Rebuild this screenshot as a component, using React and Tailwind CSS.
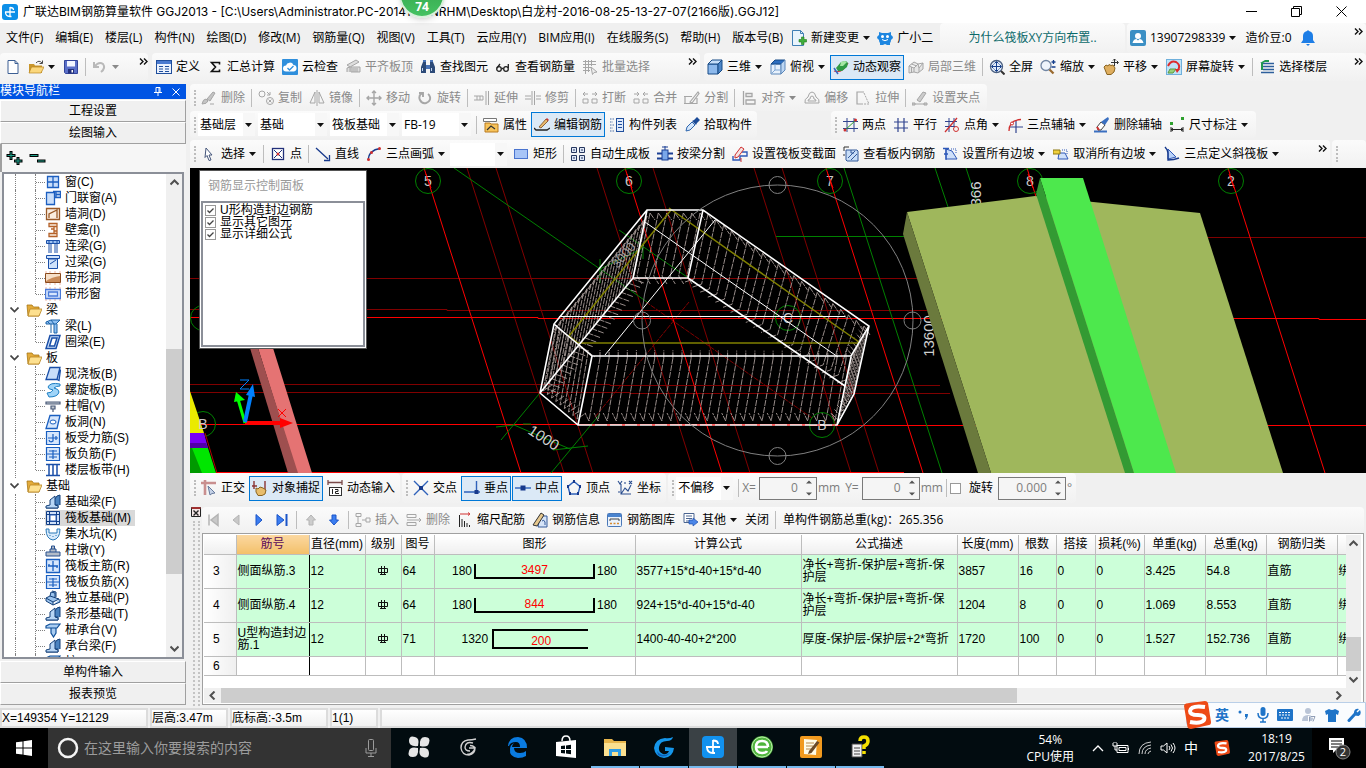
import clsx from "clsx";

const N = "#1f4e9c";
const G = "#a6a6a6";
const R = "#d03030";

const icons = {
  app: (
    <>
      <rect width="16" height="16" rx="3" fill="#0c8fe8" />
      <path d="M3 8h10M8 3v9.500M8 3.500q3.500 0 3.500 2.500M3.500 8q0 4.500 4.500 4.500h1.500" fill="none" stroke="#fff" strokeWidth="1.300" />
    </>
  ),
  file: <path d="M3 1.500h7l3 3v10H3zM10 1.500v3h3" fill="#fff" stroke="#3c5f94" />,
  open: (
    <>
      <path d="M1 5h5l1 1.500h7V14H1z" fill="#c9962c" />
      <path d="M3.500 8H16l-3 6H1z" fill="#fbd77c" stroke="#b88420" strokeWidth=".7" />
      <path d="M8 4q3-3.500 6 0M14.500 1.500V4.500h-3" fill="none" stroke="#4b4b4b" />
    </>
  ),
  save: (
    <>
      <path d="M1.500 1.500h13v13h-12l-1-1z" fill="#5a6fc8" stroke="#33449a" />
      <path d="M4 2h8v5.500H4z" fill="#f2f5ff" />
      <path d="M5 10h6v4.500H5z" fill="#23307c" />
      <path d="M8.500 11h1.500v2.500H8.500z" fill="#fff" />
    </>
  ),
  undo: <path d="M2 3v5h5M2.500 7.500Q7 2 11 5q3 4-2 8" fill="none" stroke="#b9b9b9" strokeWidth="2" />,
  define: (
    <>
      <rect x=".5" y="1.500" width="15" height="13" fill="#eaf1fd" stroke={N} />
      <path d="M1 2h14v3H1z" fill="#4a7ad0" />
      <path d="M3 7.500h4M3 10h4M3 12.500h4M9 7.500h4M9 10h4M9 12.500h4" stroke={N} />
    </>
  ),
  sigma: <path d="M12.500 5.500V3.500H4.500l4 4.500-4 4.500h8v-2" fill="none" stroke="#111" strokeWidth="1.600" />,
  cloud: (
    <>
      <rect width="16" height="16" rx="1" fill="#2f8fdc" />
      <path d="M4 12.500a3 3 0 0 1 0-6 4 4 0 0 1 7.500-.5 3.300 3.300 0 0 1 .5 6.500z" fill="#fff" />
      <path d="M5.500 9l2 2 4-4" fill="none" stroke="#2f8fdc" strokeWidth="1.300" />
    </>
  ),
  slabTop: <path d="M2 13V9l3-1v5M6 13h9V8H6zM2 6l9-5 3 2-9 5zM8 9v4M10 9v4M12 9v4" fill="#ddd" stroke={G} />,
  find: (
    <>
      <path d="M1 14V8l2-5h3v11zM15 14V8l-2-5h-3v11z" fill="#2c4a78" />
      <path d="M6 6h4v4H6zM3 1h3v2H3zM10 1h3v2h-3z" fill="#4b75b8" />
      <path d="M2.500 9v3M11.500 9v3" stroke="#c3d6f2" />
    </>
  ),
  glasses: (
    <g fill="none" stroke="#222" strokeWidth="1.300">
      <circle cx="4" cy="10" r="2.300" />
      <circle cx="11" cy="10" r="2.300" />
      <path d="M6.500 9.500h2M2 9l3-4M13.300 9V5" />
    </g>
  ),
  batch: (
    <g fill="none" stroke={G}>
      <path d="M1 2.500h13M1 5.500h13M1 8.500h8M1 11.500h7M3.500 1v14M6.500 1v12M9.500 1v6" />
      <path d="M9 8l6 5-3 .5-1.500 2z" fill="#eee" />
    </g>
  ),
  cube: (
    <>
      <path d="M1 5h10v10H1z" fill="#8db9ec" stroke="#174a86" />
      <path d="M1 5l4-4h10l-4 4z" fill="#c5def8" stroke="#174a86" />
      <path d="M11 5l4-4v10l-4 4z" fill="#4d86c7" stroke="#174a86" />
    </>
  ),
  topView: (
    <>
      <path d="M1 5h10v10H1z" fill="#e7f1fc" stroke="#5b86b9" />
      <path d="M1 5l4-4h10l-4 4z" fill="#2d6ec0" stroke="#174a86" />
      <path d="M11 5l4-4v10l-4 4z" fill="#bcd6f3" stroke="#5b86b9" />
      <path d="M5 5v6h6M5 11l-4 4" fill="none" stroke="#7fa6d3" />
    </>
  ),
  orbit: (
    <>
      <path d="M1 12q8 3 14-8" fill="none" stroke="#d04040" strokeWidth="1.300" />
      <path d="M3 9l5-6 5-1 2 2-1 4-5 4H5z" fill="#2f9a45" />
      <path d="M8 3l4-1 2 1-4 4-3 0z" fill="#a5e6a4" />
      <path d="M1 9l4 6" stroke="#3569c2" strokeWidth="1.500" />
    </>
  ),
  local3d: <path d="M1 7l5-4 4 2 5-1v6l-5 4-4-1-5 1zM1 7l5 2 4-4M6 9v4M10 5l1 4 4-5M11 9v4M3.500 5l5 2M3.500 8v5" fill="#e6e6e6" stroke={G} />,
  full: (
    <>
      <circle cx="7.500" cy="7.500" r="6" fill="#e4eefb" stroke="#4a5f80" strokeWidth="1.300" />
      <path d="M7.500 3v9M3 7.500h9M5.500 4.500l2-2 2 2M5.500 10.500l2 2 2-2M4.500 5.500l-2 2 2 2M10.500 5.500l2 2-2 2" fill="none" stroke="#163f8c" />
      <path d="M12 12l3.500 3.500" stroke="#333" strokeWidth="2" />
    </>
  ),
  zoomIn: (
    <>
      <circle cx="6" cy="6.500" r="5" fill="#eef4fc" stroke="#7186a4" strokeWidth="1.300" />
      <path d="M9.500 10.500l4 4" stroke="#9a6a30" strokeWidth="2.300" />
      <path d="M13.500 1v4M11.500 3h4M11.500 8h4" stroke="#163f8c" strokeWidth="1.300" />
    </>
  ),
  pan: (
    <>
      <path d="M1 8l2-2 2 1 1-1.500 2 1 2-.5 2 3-1 4-3 2.500H4z" fill="#dfae5f" stroke="#8a6420" />
      <path d="M11.500 0v7M8 3.500h7M10 1.500L11.500 0 13 1.500M14 2l1.500 1.500L14 5" fill="none" stroke="#333" />
    </>
  ),
  rotateScreen: (
    <>
      <rect x=".5" y=".5" width="15" height="15" fill="#bfe3f8" stroke="#6fb0dc" />
      <path d="M2 7q3-6 8-4 5 3 2 8" fill="none" stroke="#dd2c2c" strokeWidth="2" />
      <path d="M4 10h6l-3 4H2z" fill="#9ad07a" stroke="#5c9a40" />
      <path d="M9 10h5l-3 4z" fill="#dd2c2c" />
    </>
  ),
  floors: (
    <>
      <path d="M4 4.500h11M4 7.500h11M4 10.500h11M2 13.500h13" stroke="#2d5f9c" strokeWidth="1.700" />
      <path d="M1 4l5-3h4v2H6l-2 1v7H2V4z" fill="#1f9a50" />
    </>
  ),
  newChange: (
    <>
      <path d="M1.500.5h8l3 3v12h-11zM9.500.5v3h3" fill="#e9f4fc" stroke="#3f7fb5" />
      <path d="M8 9.500h2.500V7h2.500v2.500h2.500V12H13v2.500h-2.500V12H8z" fill="#3fae3a" stroke="#237a20" strokeWidth=".6" />
    </>
  ),
  mascot: (
    <>
      <path d="M2 2l3 1h6l3-1v3q2 1 2 3l-2 2q0 2-1 3v2h-3l-2-1-2 1H3v-2q-1-1-1-3L0 8q0-2 2-3z" fill="#1d86e0" />
      <circle cx="5.500" cy="6.500" r="1.500" fill="#fff" />
      <circle cx="10.500" cy="6.500" r="1.500" fill="#fff" />
      <path d="M5 9.500q3 2.500 6 0" fill="none" stroke="#fff" />
    </>
  ),
  avatar: (
    <>
      <rect width="16" height="16" rx="2" fill="#3b8fc4" />
      <circle cx="8" cy="6" r="3" fill="#fff" />
      <path d="M2.500 13q1-4 4-4l1.500 1.500L9.500 9q3 0 4 4z" fill="#fff" />
    </>
  ),
  bell: <path d="M8 0l1 1q4 1 4 5v4l2 3H1l2-3V6q0-4 4-5zM6 14h4l-2 2z" fill="#1e7ee6" />,
  brush: <path d="M1 14q1-5 4-5l2 2q-1 3-6 3zM6 9l6-7 2 1-5 8zM9 14h4" fill="#c4c4c4" stroke={G} />,
  copy: <g fill="none" stroke={G}><circle cx="4" cy="4" r="3" /><circle cx="12" cy="11" r="3.500" /><path d="M9 2l3 3M12 2v3H9M10.500 9.500l3 3M13.500 9.500l-3 3" /></g>,
  mirror: <path d="M6 2v11H1zM10 2v11h5zM8 0v16" fill="none" stroke={G} />,
  move: <path d="M8 1v14M1 8h14M6 3l2-2 2 2M6 13l2 2 2-2M3 6L1 8l2 2M13 6l2 2-2 2" fill="none" stroke={G} strokeWidth="1.400" />,
  spin: <path d="M5 3q-4 3-2 7 2 4 6 3 5-2 4-6-.5-2-2-3M2 3h4v4" fill="none" stroke={G} strokeWidth="1.900" />,
  extend: <path d="M0 6h9v4H0M3 6v4M6 6v4M12 1v14M14.500 1v14" fill="none" stroke={G} />,
  trim: <path d="M0 6h6M0 9h6M7 1v14M9.500 1v14M11 6h5M11 9h5" fill="none" stroke={G} />,
  breakUp: <path d="M1 9h5v4H1zM10 9h5v4h-5zM1 4h5M3 2L1 4l2 2M10 4h5M13 2l2 2-2 2" fill="none" stroke={G} />,
  merge: <path d="M1 9h5v4H1zM10 9h5v4h-5zM1 4h5M4 2l2 2-2 2M10 4h5M12 2l-2 2 2 2" fill="none" stroke={G} />,
  split: <path d="M0 6.500h8M0 13.500h13V8M1 7v6M6 12l8-10 1 1.500L8 13z" fill="none" stroke={G} strokeWidth="1.200" />,
  align: <path d="M2.500 1v14M5 3.500h6v3H5zM5 10h9v4H5z" fill="none" stroke={G} strokeWidth="1.300" />,
  offset: <path d="M1 13q-1-4 3-6 1-5 4-5t4 5q4 2 3 6zM4 11q0-2 2-2 0-3 2-3t2 3q2 0 2 2z" fill="none" stroke={G} />,
  stretch: (
    <>
      <path d="M9 2H2v12h6" fill="none" stroke={G} strokeWidth="1.200" />
      <path d="M9 3l5 11H9" fill="none" stroke={G} strokeDasharray="2 1" />
    </>
  ),
  grip: <path d="M0 13h3v2H0zM12 13h3v2h-3zM5 10l6-8 3 1-6 9zM3 14h9" fill="#ccc" stroke={G} />,
  props: (
    <>
      <path d="M.5 1.500h13v3H.5z" fill="#fff" stroke="#777" />
      <path d="M2 6h5l1 1h7v8H2z" fill="#f7c35a" stroke="#b97a20" />
      <path d="M4 13l4-4 4 3" fill="none" stroke="#333" strokeWidth="1.200" />
    </>
  ),
  editBar: (
    <>
      <path d="M0 11l2 2h11l3-2" fill="none" stroke="#222" strokeWidth="1.300" />
      <path d="M5 10l7-8 2 2-7 7z" fill="#e8b96c" stroke="#7a4a20" strokeWidth=".8" />
      <path d="M12 2l1-1 2 2-1 1z" fill={R} />
    </>
  ),
  compList: (
    <>
      <path d="M1 2h4M1 5h3M1 8h4M1 11h3M1 14h4" stroke="#4a6fa8" strokeWidth="1.200" strokeDasharray="1.500 1" />
      <rect x="7.500" y="1.500" width="7" height="13" fill="#dfe9fa" stroke={N} />
      <path d="M9 4.500h4M9 7.500h4M9 10.500h4" stroke={N} />
    </>
  ),
  dropper: (
    <>
      <path d="M2 14l1-4 5-5 3 3-5 5z" fill="#d4e6fb" stroke="#2e66ae" />
      <path d="M8 4l2-1 3-3 3 3-3 3-1 2z" fill="#1c4b98" />
    </>
  ),
  twoPoint: (
    <>
      <path d="M5 1v14M12 1v14M1 4.500h15M1 11.500h15" stroke="#31448f" />
      <path d="M2 14L14 3" stroke="#2ea02e" />
      <circle cx="3" cy="13" r="1.500" fill={R} />
      <circle cx="13.500" cy="3" r="1.500" fill={R} />
    </>
  ),
  parallel: <path d="M5 1v14M11 1v14M1 5h14M1 11h14" stroke="#31448f" strokeWidth="1.200" />,
  pointAngle: (
    <>
      <path d="M5 1v14M10 1v8M1 4.500h12M1 9.500h10" stroke="#31448f" />
      <path d="M1 15L13 1" stroke={R} strokeWidth="1.300" />
      <circle cx="12" cy="12" r="2.500" fill="none" stroke={R} />
    </>
  ),
  threeAxis: (
    <>
      <path d="M9 3v13M3 10h13" stroke="#31448f" strokeWidth="1.200" />
      <path d="M2 14Q2 3 14 2.500" fill="none" stroke={R} strokeWidth="1.300" />
      <circle cx="5" cy="6.500" r="1.500" fill="#fff" stroke={R} />
    </>
  ),
  delAxis: (
    <>
      <path d="M0 14.500h13" stroke="#3a6fc0" strokeWidth="2" />
      <path d="M3 10l4-5 4 3-4 5H4z" fill="#fff" stroke="#444" />
      <path d="M7 5l4-3 3-2 1 2-4 6z" fill="#3a6fc0" />
      <path d="M3 10l2 3" stroke={R} strokeWidth="2" />
    </>
  ),
  dim: (
    <>
      <path d="M2 10v5M14 10v5M2 12.500h12M4 11l-2 1.500L4 14M12 11l2 1.500-2 1.500" fill="none" stroke="#222" />
      <path d="M1 5h3v3H1zM12 0h3v3h-3z" fill="#2ea02e" />
    </>
  ),
  cursor: <path d="M5 2l6 7H8l2 5-2 .5-2-5-2 2z" fill="#fff" stroke="#44557a" />,
  point: (
    <>
      <rect x="2.500" y="2.500" width="11" height="11" fill="#fff" stroke="#22307a" strokeWidth="1.300" />
      <path d="M4 4l8 8M12 4l-8 8" stroke="#22307a" />
      <circle cx="8" cy="8" r="1.500" fill={R} />
    </>
  ),
  line: <path d="M1 2l12 11M14.500 9v5.500H9" fill="none" stroke="#17398c" strokeWidth="1.300" />,
  arc: (
    <>
      <path d="M2 14Q3 4 14 2.500" fill="none" stroke="#17398c" strokeWidth="1.400" />
      <circle cx="2.500" cy="13.500" r="1.500" fill={R} />
      <circle cx="5.500" cy="6.500" r="1.500" fill={R} />
      <circle cx="13.500" cy="2.500" r="1.500" fill={R} />
    </>
  ),
  rect: <rect x="1.500" y="3.500" width="13" height="9" fill="#a8c5f7" stroke="#4a74cf" />,
  autoSlab: (
    <g fill="#dfe8f8" stroke="#26365e">
      <path d="M1.500 1.500h5v5h-5zM9.500 1.500h5v5h-5zM1.500 9.500h5v5h-5zM9.500 9.500h5v5h-5z" />
      <path d="M3 4h2M11 4h2M3 12h2M11 12h2" />
    </g>
  ),
  beamSplit: (
    <>
      <path d="M0 7.500h16M0 12.500h16" stroke="#1b3f94" strokeWidth="1.800" />
      <rect x="5" y="4" width="6" height="10" fill="#7aa7ea" stroke="#1b3f94" />
      <path d="M5 1h6M8 0v4" stroke="#1b3f94" />
    </>
  ),
  section: (
    <>
      <path d="M1 10v4h7v-4h7V6h-5" fill="none" stroke="#2e58b8" strokeWidth="1.400" />
      <path d="M3 9l6-8 3 2-6 8-3 1z" fill="#f4e3e3" stroke={R} />
      <path d="M9 12v4" stroke={R} />
    </>
  ),
  viewBar: (
    <>
      <path d="M3 4h11l1 1v10H4l-1-1z" fill="#c8ddf7" stroke="#345a9a" />
      <path d="M5 12l7-7M8 14l6-6M8 4v3h3" stroke="#345a9a" fill="none" />
      <path d="M1 5V1h5M1 8v2" fill="none" stroke="#333" />
    </>
  ),
  slope: (
    <>
      <path d="M4 13h11L10 5 4 3z" fill="#cfe0fa" stroke="#2e58b8" />
      <path d="M1 2.500h6M4 3v11M2 8h4" stroke="#2e58b8" strokeWidth="1.300" />
      <path d="M9 3h5v5" fill="none" stroke="#2e58b8" strokeDasharray="1 1" />
    </>
  ),
  unslope: (
    <>
      <path d="M5 13h10l-3-6H6z" fill="#cfe0fa" stroke="#2e58b8" />
      <path d="M0 4h7v4H0z" fill="#f0d03c" stroke="#8f7812" />
      <path d="M9 4h5v4" fill="none" stroke="#2e58b8" strokeDasharray="1 1" />
    </>
  ),
  tilt: (
    <>
      <path d="M4 3l8 8-8 2z" fill="#b9d1f7" stroke="#2e58b8" />
      <path d="M1 1q3 3 3 6v7q6 0 11-2" fill="none" stroke="#17398c" strokeWidth="1.400" />
    </>
  ),
  ortho: (
    <>
      <path d="M0 3h15M4 0v15" stroke="#c98f8f" strokeWidth="2.600" />
      <path d="M7 6l7 7-3 .5L9 15z" fill="#c6d3e8" stroke="#66799c" />
    </>
  ),
  snap: (
    <>
      <path d="M2 1v8M13 1v10M0 6h5" stroke="#8a3434" strokeWidth="1.400" />
      <path d="M4 8l2 1 2-2 3 1 3 2-1 4-3 1.500H6L4 12z" fill="#e8bd6c" stroke="#8a6420" />
    </>
  ),
  dynInput: (
    <>
      <path d="M1 5V0M15 5V0M1 2.500h14" stroke="#7a4a4a" strokeWidth="1.300" />
      <rect x="2.500" y="7.500" width="12" height="8" fill="#fff" stroke="#333" />
      <path d="M5.500 9v5M8 9.500h3v2H8.500v2H12" fill="none" stroke="#222" />
    </>
  ),
  cross: (
    <>
      <path d="M1 1l14 14M15 1L1 15" stroke="#2f62ba" strokeWidth="1.400" />
      <rect x="6" y="6" width="4" height="4" fill="#17398c" />
    </>
  ),
  perp: (
    <>
      <path d="M0 12h16M12.500 1v12" stroke="#2f62ba" strokeWidth="1.400" />
      <rect x="10.500" y="10" width="4" height="4" fill="#17398c" />
    </>
  ),
  mid: (
    <>
      <path d="M0 8h16" stroke="#2f62ba" strokeWidth="1.400" />
      <rect x="5.500" y="5.500" width="5" height="5" fill="#17398c" />
    </>
  ),
  vertex: (
    <>
      <path d="M8 1.500l6 5L12 14H4L2 6.500z" fill="none" stroke="#2f62ba" strokeWidth="1.400" />
      <path d="M7 0h2v3H7zM1 5h2v3H1zM13 5h2v3h-2zM3 12h2v3H3zM11 12h2v3h-2z" fill="#17398c" />
    </>
  ),
  coord: <path d="M4 4v10h10M4 14l4-6 3 3 3-6M1 1l2 3 2-3M12 1l3 3M15 1l-3 3M1 12h2M8 2v2" fill="none" stroke="#2c4f90" strokeWidth="1.100" />,
  first: <path d="M4 2.500v11M13 2.500v11L6 8z" fill="#c8c8c8" stroke="#b4b4b4" strokeWidth="1.500" />,
  prev: <path d="M11 3v10L5 8z" fill="#c8c8c8" stroke="#b4b4b4" />,
  next: <path d="M5 2.500v11L11 8z" fill="#3b7df0" stroke="#1b55c8" />,
  last: (
    <>
      <path d="M3 2.500v11L10 8z" fill="#3b7df0" stroke="#1b55c8" />
      <path d="M12.500 2v12" stroke="#1b55c8" strokeWidth="2" />
    </>
  ),
  up: <path d="M8 3l4.500 5H10v5H6V8H3.500z" fill="#cdcdcd" stroke="#b4b4b4" />,
  down: <path d="M8 13l4.500-5H10V3H6v5H3.500z" fill="#3b7df0" stroke="#1b55c8" />,
  insert: <path d="M1 1.500h5v3H1zM1 11.500h5v3H1zM7 8h4M11 6h4v4h-4zM3 5v6" fill="none" stroke={G} />,
  remove: <path d="M1 2.500h9v3H1zM1 10.500h9v3H1zM1 8h14M13 6l2 2-2 2" fill="none" stroke={G} />,
  scaleBar: (
    <>
      <path d="M2.500 3v12M5 7v8M7.500 9v6M10 11v4M12.500 13v2" stroke="#222" />
      <path d="M3 2h9M11 .5L13 2l-2 1.500" fill="none" stroke={R} />
    </>
  ),
  barInfo: (
    <>
      <path d="M8 4h7v11H6z" fill="#d6e4f8" stroke="#345a9a" />
      <path d="M1 13L9 1l3 2-7 11z" fill="#e6c88e" stroke="#333" />
      <path d="M10 9q2-2 3 1v3" fill="none" stroke="#345a9a" />
    </>
  ),
  library: (
    <>
      <rect x=".5" y="1.500" width="14" height="13" rx="1" fill="#eaf2fc" stroke="#4a78b8" />
      <path d="M1 2h13v3H1z" fill="#4a84cf" />
      <path d="M3 9V7h9v2" fill="none" stroke="#444" />
      <path d="M3 11.500h2M6.500 11.500h2M10 11.500h2" stroke="#d88c30" strokeWidth="1.500" />
    </>
  ),
  others: (
    <>
      <path d="M2 1.500h10v9H2z" fill="#fff" stroke="#4a6490" />
      <path d="M4 4h6M4 6.500h6M4 9h4" stroke="#4a6490" />
      <path d="M7 8h4V6l5 4-5 4v-2H7z" fill="#4b86e8" stroke="#1c4fae" strokeWidth=".7" />
    </>
  ),
  folder: (
    <>
      <path d="M1 3h5l1.500 2H13v9H2z" fill="#e3ab3a" stroke="#a87714" strokeWidth=".8" />
      <path d="M4 7h12l-3 7H2z" fill="#fde08f" stroke="#b88420" strokeWidth=".8" />
    </>
  ),
  window: <path d="M2.500 2.500h11v11h-11zM8 2v12M3 8h10" fill="#c9defa" stroke="#1d5fc0" strokeWidth="1.300" />,
  doorWindow: <path d="M1.500 2.500h8v12h-8zM11 1v7M8 1.500h7.500v6H10M11 4.500h4" fill="#c9defa" stroke="#1d5fc0" strokeWidth="1.300" />,
  wallHole: <path d="M1.500 2.500h13v11h-13zM4 12V8l8-4v8" fill="#fbeee0" stroke="#9a5a28" strokeWidth="1.300" />,
  niche: <path d="M4 1.500h8v13H4v-3h5v-7H4zM6 7h3M9 4.500h3M9 9h3M9 11.500h3" fill="#fbeee0" stroke="#b5622a" strokeWidth="1.300" />,
  linkBeam: <path d="M1.500 2.500h13v3h-13zM4 6v9M6 6v9M10 6v9M12 6v9M4 2v3M8 2v3M12 2v3" fill="#9cc2f4" stroke="#1a4fa8" />,
  lintel: <path d="M1.500 1.500h13v3h-13zM3.500 5h9v9.500h-9zM5 10l6-4" fill="#cfe2fb" stroke="#1a4fa8" />,
  stripHole: (
    <>
      <path d="M1 1v14M5 1v14M10 1v14M15 1v14" stroke="#f0b8a8" />
      <path d="M.5 3.500h15v9H.5z" fill="#f6dfc8" stroke="#8a4a1c" />
      <path d="M1 11q6-4 14-5v6H1z" fill="#c98a58" />
    </>
  ),
  stripWindow: (
    <>
      <path d="M1 1v14M5 1v14M10 1v14M15 1v14" stroke="#f0b8a8" />
      <path d="M.5 3.500h15v9H.5zM3.500 6h9v4h-9z" fill="#d6e5fd" stroke="#4a7ad8" strokeWidth="1.300" />
    </>
  ),
  beam: <path d="M1 4l5-2h9l-4 4H1zM6 6v9M9 6v9h3V6M2 3l3 3M6 2l3 4" fill="#8fc0f2" stroke="#1b62a8" />,
  ringBeam: <path d="M5 1.500h10l-4 13H1zM7 4h5l-2.500 8H4.500z" fill="#cfe2fb" fillRule="evenodd" stroke="#1a4fa8" strokeWidth="1.500" />,
  slab: <path d="M5 1.500h10l-3 12H1zM12 13.500l2 1 1.500-11" fill="#c9defa" stroke="#1a4fa8" strokeWidth="1.300" />,
  spiral: <path d="M15 2Q5 0 3 5q0 2 5 3-1 3-6 3l2 4q9 0 10-5 0-3-5-4 2-2 6-2z" fill="#9fd4f8" stroke="#1d7fc4" />,
  cap: <path d="M1 4h14v2H1zM6 8h4v3H6zM8 11v3" fill="#bfc6cf" stroke="#4a5a78" strokeWidth="1.200" />,
  slabHole: (
    <>
      <path d="M5 1.500h10l-3 13H1z" fill="#d7e7fc" stroke="#1a5fc0" strokeWidth="1.300" />
      <ellipse cx="8" cy="8" rx="3" ry="2" fill="#fff" stroke="#1a5fc0" />
    </>
  ),
  slabBar: <path d="M1.500 1.500h13v13h-13zM3 8h10M8 4v7q-3 2-4-1M11 6v4" fill="#d7e7fc" stroke="#1a5fc0" strokeWidth="1.200" />,
  negBar: <path d="M1.500 1.500h13v13h-13zM4 5h8M4 11h8M8 4v9M2 8h12" fill="#d7e7fc" stroke="#1a5fc0" strokeWidth="1.200" />,
  stripSlab: <path d="M1 2.500h14M1 13.500h14M4 3v10M8 3v10M12 3v10" fill="none" stroke="#1a4fa8" strokeWidth="1.500" />,
  foundBeam: (
    <>
      <path d="M1 14h12v-3H9V6l3-4 3-1v10" fill="#4a83c0" stroke="#123f78" />
      <path d="M1 14v-2l4-1V6l5-4v9l3 1v2z" fill="#b8d6f5" stroke="#123f78" />
    </>
  ),
  raft: (
    <>
      <path d="M1.500 1.500h13v13h-13z" fill="#cfe0f8" stroke="#123f88" />
      <path d="M4.500 2v12M11.500 2v12M2 4.500h12M2 11.500h12" stroke="#123f88" />
      <path d="M5 5h6v6H5z" fill="#fff" stroke="#2f62ba" />
    </>
  ),
  sump: <path d="M1 3h3v4h8V3h3q0 10-7 11Q1 13 1 3zM5 9v1M8 10v1M11 9v1" fill="#d8eafb" stroke="#2878b8" />,
  pier: <path d="M1 10h14v4H1zM5 10V7h6v3M6.500 7V4h3v3" fill="#b3bcc8" stroke="#27508f" />,
  mainBar: <path d="M1.500 1.500h13v13h-13zM3 8h10M8 3v10M4 6v2M12 8v2" fill="#d7e7fc" stroke="#1a5fc0" strokeWidth="1.300" />,
  isoFound: <path d="M1 8l4-2 9 3-6 3zM1 8v3l7 4v-3M8 15l7-3V9M5 6l1-4 4 1v5M7 1l4 1v5" fill="#9cc4ee" stroke="#123f78" />,
  pile: <path d="M1 4l4-2h10l-3 4H1zM6 6h5v5l-2.500 4L6 11zM1 4v2" fill="#a9cdf2" stroke="#0f4f98" strokeWidth="1.200" />,
};

const Ico = ({ name, className = "h-4 w-4" }) => (
  <svg viewBox="0 0 16 16" className={clsx("shrink-0", className)} aria-hidden="true">
    {icons[name]}
  </svg>
);

const Caret = ({ muted }) => (
  <svg viewBox="0 0 8 4" className="h-1 w-2 shrink-0" aria-hidden="true">
    <path d="M0 0h7L3.500 4z" fill={muted ? "#8a8a8a" : "#111"} />
  </svg>
);

const Chevrons = ({ className }) => (
  <button aria-label="更多" className={clsx("self-start pt-[5px]", className)}>
    <svg viewBox="0 0 9 7" className="h-[7px] w-[9px]">
      <path d="M1 .5l3 3-3 3M5 .5l3 3-3 3" fill="none" stroke="#111" strokeWidth="1.400" />
    </svg>
  </button>
);

const Tool = ({ icon, label, arrow, active, disabled }) => (
  <button
    disabled={disabled}
    aria-label={label ? undefined : icon}
    className={clsx(
      "flex h-[25px] shrink-0 items-center gap-1 border px-[2px] whitespace-nowrap",
      active ? "border-[#0078d7] bg-[#dbe9f6]" : "border-transparent",
      disabled ? "text-[#8a8a8a]" : "text-black"
    )}
  >
    {icon && <Ico name={icon} />}
    {label && <span>{label}</span>}
    {arrow && <Caret muted={disabled} />}
  </button>
);

const Sep = () => <span className="mx-[2px] h-[18px] w-px shrink-0 bg-[#bdbdbd]" />;

const Grip = () => (
  <span className="mr-px ml-1 h-[16px] w-0 shrink-0 border-l-2 border-dotted border-[#bdbdbd]" />
);

const Group = ({ children, className }) => (
  <div className={clsx("flex items-center gap-px self-stretch rounded-sm bg-linear-to-b from-[#fbfbfb] to-[#f1f1f1]", className)}>
    {children}
  </div>
);

const Combo = ({ value, label, className }) => (
  <div className={clsx("relative mr-[2px] h-[23px] shrink-0 bg-white", className)}>
    <select aria-label={label} defaultValue={value} className="h-full w-full appearance-none bg-transparent pl-[2px] outline-none">
      <option>{value}</option>
    </select>
    <span className="pointer-events-none absolute inset-y-0 right-0 flex w-3 items-center justify-center bg-[#f7f7f7]">
      <Caret />
    </span>
  </div>
);

const Spin = ({ label, value, className }) => (
  <div className={clsx("flex h-[23px] shrink-0 items-center border border-[#7a7a7a] bg-[#f5f5f5] pr-1", className)}>
    <input aria-label={label} defaultValue={value} className="w-full min-w-0 bg-transparent pr-2 text-right text-[#7d7d7d] outline-none" />
    <svg viewBox="0 0 6 16" className="h-4 w-[6px] shrink-0" aria-hidden="true">
      <path d="M0 3.500L3 .5l3 3zM0 12.500l3 3 3-3z" fill="#555" />
    </svg>
  </div>
);

const Check = ({ className, ...props }) => (
  <span className="relative flex h-[11px] w-[11px] shrink-0">
    <input type="checkbox" className="peer h-full w-full appearance-none border border-[#999] bg-white" {...props} />
    <svg viewBox="0 0 11 11" className="pointer-events-none absolute inset-0 hidden h-[11px] w-[11px] peer-checked:block">
      <path d="M2.500 5.500l2 2 4-4" fill="none" stroke="#444" strokeWidth="1.300" />
    </svg>
  </span>
);

const menus = ["文件(F)", "编辑(E)", "楼层(L)", "构件(N)", "绘图(D)", "修改(M)", "钢筋量(Q)", "视图(V)", "工具(T)", "云应用(Y)", "BIM应用(I)", "在线服务(S)", "帮助(H)", "版本号(B)"];

const TitleBar = () => (
  <header className="relative flex h-[23px] shrink-0 items-center bg-white pr-[2px] pl-[2px]">
    <Ico name="app" />
    <h1 className="ml-[5px] flex-1 font-[Inter,Noto_Sans_CJK_SC,sans-serif] whitespace-pre">
      广联达BIM钢筋算量软件 GGJ2013 - [C:\Users\Administrator.PC-20141127NRHM\Desktop\白龙村-2016-08-25-13-27-07(2166版).GGJ12]
    </h1>
    <button aria-label="最小化" className="flex w-[45px] justify-center">
      <svg viewBox="0 0 11 11" className="h-[11px] w-[11px]"><path d="M0 5.500h11" stroke="#000" /></svg>
    </button>
    <button aria-label="还原" className="flex w-[45px] justify-center">
      <svg viewBox="0 0 11 11" className="h-[11px] w-[11px]"><path d="M.5 2.500h8v8h-8zM2.500 2.500v-2h8v8h-2" fill="none" stroke="#000" /></svg>
    </button>
    <button aria-label="关闭" className="flex w-[45px] justify-center">
      <svg viewBox="0 0 11 11" className="h-[11px] w-[11px]"><path d="M.5.5l10 10M10.500.5l-10 10" stroke="#000" /></svg>
    </button>
    <div className="absolute -top-7 left-[399px] z-10 flex h-[46px] w-[46px] items-end justify-center rounded-full border-2 border-[#d8efdb] bg-linear-to-b from-[#2e9c44] to-[#45c262] pb-px text-[12px] leading-4 font-bold text-white shadow-md">
      74
    </div>
  </header>
);

const MenuBar = () => (
  <nav className="flex h-[30px] shrink-0 items-center pl-px">
    <div className="flex gap-[2px]">
      {menus.map((m) => (
        <button key={m} className="px-[5px] whitespace-nowrap">{m}</button>
      ))}
    </div>
    <Tool icon="newChange" label="新建变更" arrow />
    <Tool icon="mascot" label="广小二" />
    <div className="flex min-w-0 flex-1 gap-[2px] self-stretch pl-1">
      <Group className="flex-1 justify-center">
        <a href="#tips" className="text-[#0b6a6a]">为什么筏板XY方向布置..</a>
      </Group>
      <Group className="w-[239px]">
        <Tool icon="avatar" label="13907298339" arrow />
        <span className="px-1">造价豆:0</span>
        <Tool icon="bell" />
        <Chevrons className="ml-auto pr-[3px]" />
      </Group>
    </div>
  </nav>
);

const MainToolbar = () => (
  <div className="flex h-[28px] shrink-0 items-center gap-1">
    <Group className="w-[148px] pl-[2px]">
      <Tool icon="file" />
      <Tool icon="open" arrow />
      <Tool icon="save" />
      <Sep />
      <Tool icon="undo" arrow disabled />
      <Chevrons className="ml-auto" />
    </Group>
    <Group className="w-[548px] pl-px">
      <Tool icon="define" label="定义" />
      <Tool icon="sigma" label="汇总计算" />
      <Tool icon="cloud" label="云检查" />
      <Tool icon="slabTop" label="平齐板顶" disabled />
      <Tool icon="find" label="查找图元" />
      <Tool icon="glasses" label="查看钢筋量" />
      <Tool icon="batch" label="批量选择" disabled />
      <Chevrons className="ml-auto pr-[3px]" />
    </Group>
    <Group className="min-w-0 flex-1">
      <Tool icon="cube" label="三维" arrow />
      <Tool icon="topView" label="俯视" arrow />
      <Tool icon="orbit" label="动态观察" active />
      <Tool icon="local3d" label="局部三维" disabled />
      <Sep />
      <Tool icon="full" label="全屏" />
      <Tool icon="zoomIn" label="缩放" arrow />
      <Tool icon="pan" label="平移" arrow />
      <Tool icon="rotateScreen" label="屏幕旋转" arrow />
      <Sep />
      <Tool icon="floors" label="选择楼层" />
      <Chevrons className="ml-auto pr-[3px]" />
    </Group>
  </div>
);

const EditToolbar = () => (
  <div className="flex h-[27px] shrink-0">
    <Group className="pr-1">
      <Grip />
      <Tool icon="brush" label="删除" disabled />
      <Sep />
      <Tool icon="copy" label="复制" disabled />
      <Tool icon="mirror" label="镜像" disabled />
      <Sep />
      <Tool icon="move" label="移动" disabled />
      <Tool icon="spin" label="旋转" disabled />
      <Sep />
      <Tool icon="extend" label="延伸" disabled />
      <Tool icon="trim" label="修剪" disabled />
      <Sep />
      <Tool icon="breakUp" label="打断" disabled />
      <Tool icon="merge" label="合并" disabled />
      <Tool icon="split" label="分割" disabled />
      <Sep />
      <Tool icon="align" label="对齐" arrow disabled />
      <Tool icon="offset" label="偏移" disabled />
      <Tool icon="stretch" label="拉伸" disabled />
      <Sep />
      <Tool icon="grip" label="设置夹点" disabled />
    </Group>
  </div>
);

const ComponentToolbar = () => (
  <div className="flex h-[27px] shrink-0">
    <Group className="w-[567px]">
      <Grip />
      <Combo label="楼层" value="基础层" className="w-[57px]" />
      <Combo label="构件类别" value="基础" className="w-[69px]" />
      <Combo label="构件类型" value="筏板基础" className="w-[69px]" />
      <Combo label="构件" value="FB-19" className="w-[69px]" />
      <Sep />
      <Tool icon="props" label="属性" />
      <Tool icon="editBar" label="编辑钢筋" active />
      <Tool icon="compList" label="构件列表" />
      <Tool icon="dropper" label="拾取构件" />
    </Group>
    <Group className="ml-[74px] pr-1">
      <Grip />
      <Tool icon="twoPoint" label="两点" />
      <Tool icon="parallel" label="平行" />
      <Tool icon="pointAngle" label="点角" arrow />
      <Tool icon="threeAxis" label="三点辅轴" arrow />
      <Tool icon="delAxis" label="删除辅轴" />
      <Tool icon="dim" label="尺寸标注" arrow />
    </Group>
  </div>
);

const DrawToolbar = () => (
  <div className="mt-[2px] flex h-[28px] shrink-0 gap-[2px]">
    <Group className="flex-1">
      <Grip />
      <Tool icon="cursor" label="选择" arrow />
      <Sep />
      <Tool icon="point" label="点" />
      <Sep />
      <Tool icon="line" label="直线" />
      <Tool icon="arc" label="三点画弧" arrow />
      <Combo label="画弧方式" value="" className="w-[57px]" />
      <Tool icon="rect" label="矩形" />
      <Sep />
      <Tool icon="autoSlab" label="自动生成板" />
      <Tool icon="beamSplit" label="按梁分割" />
      <Tool icon="section" label="设置筏板变截面" />
      <Tool icon="viewBar" label="查看板内钢筋" />
      <Tool icon="slope" label="设置所有边坡" arrow />
      <Tool icon="unslope" label="取消所有边坡" arrow />
      <Tool icon="tilt" label="三点定义斜筏板" arrow />
      <Chevrons className="ml-auto pr-[3px]" />
    </Group>
    <Group className="w-[34px]">
      <Grip />
    </Group>
  </div>
);

const tree = [
  { icon: "window", label: "窗(C)" },
  { icon: "doorWindow", label: "门联窗(A)" },
  { icon: "wallHole", label: "墙洞(D)" },
  { icon: "niche", label: "壁龛(I)" },
  { icon: "linkBeam", label: "连梁(G)" },
  { icon: "lintel", label: "过梁(G)" },
  { icon: "stripHole", label: "带形洞" },
  { icon: "stripWindow", label: "带形窗", last: true },
  { group: true, label: "梁" },
  { icon: "beam", label: "梁(L)" },
  { icon: "ringBeam", label: "圈梁(E)", last: true },
  { group: true, label: "板" },
  { icon: "slab", label: "现浇板(B)" },
  { icon: "spiral", label: "螺旋板(B)" },
  { icon: "cap", label: "柱帽(V)" },
  { icon: "slabHole", label: "板洞(N)" },
  { icon: "slabBar", label: "板受力筋(S)" },
  { icon: "negBar", label: "板负筋(F)" },
  { icon: "stripSlab", label: "楼层板带(H)", last: true },
  { group: true, label: "基础" },
  { icon: "foundBeam", label: "基础梁(F)" },
  { icon: "raft", label: "筏板基础(M)", selected: true },
  { icon: "sump", label: "集水坑(K)" },
  { icon: "pier", label: "柱墩(Y)" },
  { icon: "mainBar", label: "筏板主筋(R)" },
  { icon: "negBar", label: "筏板负筋(X)" },
  { icon: "isoFound", label: "独立基础(P)" },
  { icon: "foundBeam", label: "条形基础(T)" },
  { icon: "pile", label: "桩承台(V)" },
  { icon: "foundBeam", label: "承台梁(F)" },
  { icon: "pile", label: "桩(U)" },
];

const TreeRow = ({ icon, label, group, last, selected }) =>
  group ? (
    <li className="flex h-4 items-center pl-[6px]">
      <button aria-label={`收起${label}`} className="flex w-4 items-center">
        <svg viewBox="0 0 9 6" className="h-[6px] w-[9px]"><path d="M.5.5l4 4 4-4" fill="none" stroke="#444" strokeWidth="1.700" /></svg>
      </button>
      <Ico name="folder" />
      <span className="ml-1">{label}</span>
    </li>
  ) : (
    <li className="flex h-4 items-center pl-[11px]">
      <span className="h-full w-5 border-l border-dotted border-[#808080]" />
      <span className={clsx("w-0 border-l border-dotted border-[#808080]", last ? "h-2 self-start" : "h-full")} />
      <span className="w-[9px] border-t border-dotted border-[#808080]" />
      <button className={clsx("flex h-4 items-center gap-1 pr-1", selected && "bg-[#d9d9d9]")}>
        <Ico name={icon} />
        {label}
      </button>
    </li>
  );

const ScrollArrow = ({ d }) => (
  <svg viewBox="0 0 9 9" className="h-[9px] w-[9px] shrink-0" aria-hidden="true">
    <path d={d} fill="none" stroke="#505050" strokeWidth="2" />
  </svg>
);

const panelButton = "h-[22px] shrink-0 border border-[#a0a0a0] border-t-white border-l-white bg-[#f0f0f0]";

const SidePanel = () => (
  <aside className="mr-1 flex w-[186px] shrink-0 flex-col pb-px font-[Liberation_Sans,Noto_Sans_CJK_SC,sans-serif]">
    <div className="mb-px flex h-[15px] shrink-0 items-center bg-[#0054e3] text-white">
      <h2 className="flex-1 leading-[15px]">模块导航栏</h2>
      <button aria-label="固定" className="mr-[10px]">
        <svg viewBox="0 0 8 9" className="h-[9px] w-2"><path d="M2 .5h4v5M2 .5v5M0 5.500h8M4 6v3M5 1v4" fill="none" stroke="#fff" /></svg>
      </button>
      <button aria-label="关闭面板" className="mr-[6px]">
        <svg viewBox="0 0 8 8" className="h-2 w-2"><path d="M.5.5l7 7M7.500.5l-7 7" stroke="#fff" /></svg>
      </button>
    </div>
    <button className={panelButton}>工程设置</button>
    <button className={panelButton}>绘图输入</button>
    <div className="flex h-7 shrink-0 items-center gap-[6px] border-l-2 border-[#a0a0a0] bg-[#f6f6f6] pl-1">
      <button aria-label="全部展开">
        <svg viewBox="0 0 17 16" className="h-4 w-[17px]">
          <path d="M5 1v9M.5 5.500h9M12 7v8M8 11h8.500" stroke="#000" strokeWidth="3" />
          <path d="M5 2v7M1.500 5.500h7M12 8v6M9 11h6.500" stroke="#1fa08a" />
        </svg>
      </button>
      <button aria-label="全部收起">
        <svg viewBox="0 0 17 16" className="h-4 w-[17px]">
          <path d="M.5 5.500h9M8 11h8.500" stroke="#000" strokeWidth="3" />
          <path d="M1.500 5.500h7M9 11h6.500" stroke="#1fa08a" />
        </svg>
      </button>
    </div>
    <div className="mx-[2px] mb-[2px] flex min-h-0 flex-1 border-2 border-[#8b8f98] bg-white">
      <ul className="min-w-0 flex-1 overflow-hidden">
        {tree.map((row, i) => (
          <TreeRow key={i} {...row} />
        ))}
      </ul>
      <div className="flex w-4 flex-col items-center bg-[#f0f0f0]">
        <span className="py-1"><ScrollArrow d="M.5 6.500l4-4 4 4" /></span>
        <span className="w-full flex-[158]" />
        <span className="w-full flex-[225] bg-[#cdcdcd]" />
        <span className="w-full flex-[66]" />
        <span className="py-1"><ScrollArrow d="M.5 2.500l4 4 4-4" /></span>
      </div>
    </div>
    <button className={panelButton}>单构件输入</button>
    <button className={panelButton}>报表预览</button>
  </aside>
);

const mix = (a, b, t) => [a[0] + (b[0] - a[0]) * t, a[1] + (b[1] - a[1]) * t];

// reinforcement strokes between two edges, with a small hook at each end
const rebar = (a, b, c, d, n, hook) => {
  const out = [];
  for (let i = 0; i <= n; i++) {
    const [x1, y1] = mix(a, b, i / n);
    const [x2, y2] = mix(c, d, i / n);
    out.push(`M${x1.toFixed(1)} ${y1.toFixed(1)}L${x2.toFixed(1)} ${y2.toFixed(1)}l${hook[0]} ${hook[1]}M${x1.toFixed(1)} ${y1.toFixed(1)}l${hook[2]} ${hook[3]}`);
  }
  return out.join("");
};

const hatch = [
  rebar([600, 358], [846, 359], [589, 421], [835, 421], 27, [-4, -8, 0, -8]),
  rebar([650, 213], [700, 213], [637, 276], [687, 276], 6, [5, 8, 5, 7]),
  rebar([708, 214], [864, 326], [694, 279], [846, 380], 20, [-9, 3, 6, 9]),
  rebar([647, 216], [557, 325], [633, 279], [545, 388], 24, [11, 4, -5, 9]),
  rebar([556, 327], [588, 352], [543, 391], [577, 419], 8, [9, -6, 7, 5]),
  rebar([852, 355], [866, 332], [838, 420], [853, 393], 6, [-6, -6, -5, -6]),
].join("");

const bubbles = [
  ["5", 428, 181], ["6", 629, 181], ["7", 830, 181], ["8", 1030, 181], ["2", 1231, 181],
  ["C", 788, 318], ["B", 822, 425], ["B", 203, 424], ["", 203, 318],
];

const Viewport = () => (
  <div className="relative min-h-0 flex-1 overflow-hidden bg-black">
    <svg viewBox="190 168 1176 305" preserveAspectRatio="xMinYMin slice" className="h-full w-full" fill="none" fontFamily="Liberation Sans, sans-serif">
      <path d="M467 168l97 305M496 168l97 305M597 168l97 305M653 168l97 305M754 168l97 305M782 168l97 305M190 278.500h740M190 309.500h257v1h480M190 384.500h420v1h330M190 392.500h440v1h320M1200 237.500h166" stroke="#800000" />
      <path d="M595 417L689 302M646 302l166 116" stroke="#800000" strokeDasharray="5 1" />
      <path d="M424 168l97 305M625 168l97 305M826 168l97 305M1027 168l10 32M1228 168l97 305M190 317.500h348v1h781v1h47M190 424.500h620v1h556M190 472.500h714" stroke="#ff0000" />
      <g stroke="#008000">
        <path d="M776 236.500h130M844 168l98 305M935 168l14 42M966 168l13 40M454 168l146 101 47 33M619 230l68 47M600 259v24M643 243v16M600 269l43-21" />
        <path d="M539 394l-38 46M496 427l18-2 56 24M553 450l35-4M551 473l49-59M523 424h8" />
        {bubbles.map(([t, x, y], i) => (
          <circle key={i} cx={x} cy={y} r="12.500" />
        ))}
      </g>
      <path d="M190 391l14 42h-14z" fill="#eaea00" />
      <path d="M190 433h14l4 15h-18z" fill="#7a00f5" />
      <path d="M190 443h16l2 5h-18z" fill="#5200a8" />
      <path d="M190 448h18l8 25h-26z" fill="#00e600" />
      <path d="M190 448h2l10 25h-12z" fill="#009a00" />
      <path d="M205 433l12 40" stroke="#b00000" />
      <g fill="#c8c8c8" fontSize="14" textAnchor="middle">
        {bubbles.filter(([t]) => t).map(([t, x, y]) => (
          <text key={`${t}${x}`} x={x} y={y + 5}>{t}</text>
        ))}
      </g>
      <path d="M426 174l5 14M627 174l5 14M828 174l5 14M1028 174l5 14M1229 174l5 14" stroke="#ff0000" />
      <g fill="#d0d0d0" fontSize="15" textAnchor="middle">
        <text transform="translate(541 442) rotate(33)">1000</text>
        <text transform="translate(627 258) rotate(-50)" fontSize="13" fill="#9a9494">3000</text>
        <text transform="translate(934 336) rotate(-90)">13600</text>
        <text transform="translate(981 194) rotate(-90)">366</text>
      </g>
      <path d={hatch} stroke="#a89c98" strokeDasharray="6 1" strokeWidth=".9" />
      <path d="M669 208l190 134-1 1H578l-9-7L671 210" stroke="#808000" strokeWidth="1.500" />
      <path d="M559 316.500h286M645 222l193 135M715 220L605 355" stroke="#fff" />
      <path d="M647 210h56l166 116-15 68-17 31H578l-38-32 14-69zM554 324l38 32h259l18-30M592 356l-14 69M851 357l-14 68M647 210l-14 68h55l15-68M633 278L540 393M688 278l157 108" stroke="#fff" strokeWidth="1.600" />
      <path d="M592 425h245" stroke="#ff0000" strokeDasharray="3 12" />
      <g stroke="#808080">
        <circle cx="777.500" cy="320.500" r="135.500" />
        <circle cx="777.500" cy="185" r="8.500" />
        <circle cx="777.500" cy="456" r="8.500" />
        <circle cx="642" cy="320.500" r="8.500" />
        <circle cx="912.500" cy="320.500" r="8.500" />
      </g>
      <path d="M907 212l128-16 165 17 83 260H991z" fill="#9fb75c" />
      <path d="M907 212l-4 22 75 239h13z" fill="#6b7a3d" />
      <path d="M1040 178h43l93 295h-42z" fill="#4de84d" />
      <path d="M1040 178l-4 16 89 279h9z" fill="#339a33" />
      <path d="M258 348h15l39 125h-15z" fill="#e57373" />
      <path d="M250 348h8l40 125h-10z" fill="#9e4f4f" />
      <path d="M245 423h36" stroke="#ff0000" strokeWidth="4" />
      <path d="M280 418l13 5-13 5z" fill="#ff0000" />
      <path d="M245 423l-7-24" stroke="#00ff00" strokeWidth="3" />
      <path d="M234 402l2-10 9 8z" fill="#00ff00" />
      <path d="M245 422l6-28" stroke="#0080ff" strokeWidth="4" />
      <path d="M246 395l7-11 2 13z" fill="#0080ff" />
      <path d="M240 380h9l-9 9h9" stroke="#0080ff" />
      <path d="M278 409l8 8M286 409l-8 8" stroke="#ff0000" />
    </svg>

    <section className="absolute top-[3px] left-[10px] flex h-[177px] w-[166px] flex-col bg-white font-[Liberation_Sans,Noto_Sans_CJK_SC,sans-serif] shadow-[0_0_0_1px_#555]">
      <h3 className="px-2 py-[6px] leading-[18px] text-[#9a9a9a]">钢筋显示控制面板</h3>
      <div className="mx-px mb-px flex-1 border-2 border-[#8b8f98] pt-px pl-[2px]">
        {["U形构造封边钢筋", "显示其它图元", "显示详细公式"].map((t) => (
          <label key={t} className="flex h-3 items-center gap-1 leading-3">
            <Check defaultChecked />
            {t}
          </label>
        ))}
      </div>
    </section>
  </div>
);

const SnapBar = () => (
  <div className="flex h-[30px] shrink-0 gap-[2px] text-black">
    <Group className="pr-[2px]">
      <Grip />
      <Tool icon="ortho" label="正交" />
      <Tool icon="snap" label="对象捕捉" active />
      <Tool icon="dynInput" label="动态输入" />
    </Group>
    <Group className="pr-[2px]">
      <Grip />
      <Tool icon="cross" label="交点" />
      <Tool icon="perp" label="垂点" active />
      <Tool icon="mid" label="中点" active />
      <Tool icon="vertex" label="顶点" />
      <Tool icon="coord" label="坐标" />
    </Group>
    <Group className="pr-1">
      <Grip />
      <Combo label="偏移方式" value="不偏移" className="w-[57px]" />
      <Sep />
      <span className="text-[#7d7d7d]">X=</span>
      <Spin label="X 偏移" value="0" className="ml-[2px] w-[58px]" />
      <span className="mr-1 text-[#7d7d7d]">mm</span>
      <span className="text-[#7d7d7d]">Y=</span>
      <Spin label="Y 偏移" value="0" className="ml-[2px] w-[58px]" />
      <span className="text-[#7d7d7d]">mm</span>
      <Sep />
      <label className="flex items-center gap-2">
        <Check />
        旋转
      </label>
      <Spin label="旋转角度" value="0.000" className="ml-1 w-[68px]" />
      <span className="text-[#7d7d7d]">°</span>
    </Group>
  </div>
);

const columns = [
  ["", "w-[32px]"], ["筋号", "w-[73px]"], ["直径(mm)", "w-[56px]"], ["级别", "w-[36px]"], ["图号", "w-[33px]"],
  ["图形", "w-[201px]"], ["计算公式", "w-[166px]"], ["公式描述", "w-[156px]"], ["长度(mm)", "w-[61px]"], ["根数", "w-[38px]"],
  ["搭接", "w-[39px]"], ["损耗(%)", "w-[49px]"], ["单重(kg)", "w-[61px]"], ["总重(kg)", "w-[61px]"], ["钢筋归类", "w-[71px]"], ["", "w-[40px]"],
];

const rows = [
  ["侧面纵筋.3", "12", "64", ["180", "3497"], "3577+15*d-40+15*d-40", "净长+弯折-保护层+弯折-保护层", "3857", "16", "0", "0", "3.425", "54.8", "直筋", "绑扎"],
  ["侧面纵筋.4", "12", "64", ["180", "844"], "924+15*d-40+15*d-40", "净长+弯折-保护层+弯折-保护层", "1204", "8", "0", "0", "1.069", "8.553", "直筋", "绑扎"],
  ["U型构造封边筋.1", "12", "71", ["1320", "200"], "1400-40-40+2*200", "厚度-保护层-保护层+2*弯折", "1720", "100", "0", "0", "1.527", "152.736", "直筋", "绑扎"],
];

const Shape = ({ size: [side, len], open }) =>
  open ? (
    <div className="flex items-center gap-1 pl-[26px]">
      {side}
      <span className="flex h-5 w-[96px] items-center justify-center border-2 border-r-0 border-black pt-1 text-[#ff0000]">{len}</span>
    </div>
  ) : (
    <div className="flex items-center justify-center gap-[2px]">
      {side}
      <span className="flex h-[15px] w-[121px] items-center justify-center border-2 border-t-0 border-black text-[#ff0000]">{len}</span>
      {side}
    </div>
  );

const Grade = () => (
  <svg viewBox="0 0 10 10" className="mx-auto h-[10px] w-[10px]" role="img" aria-label="三级钢">
    <path d="M.5 2.500h9v4h-9zM3.500 0v9M6.500 0v9M2 8.500h6" fill="none" stroke="#111" />
  </svg>
);

const cell = "overflow-hidden border-r border-b border-[#bdbdbd] px-px leading-3";

const RebarTable = () => (
  <div className="flex min-h-0 flex-1 flex-col border border-[#a0a0a0] bg-white pt-px pr-[2px] pl-px font-[Liberation_Sans,Noto_Sans_CJK_SC,sans-serif]">
    <div className="flex min-h-0 flex-1">
      <div className="min-w-0 flex-1 overflow-hidden">
        <table className="w-[1173px] table-fixed border-collapse">
          <thead>
            <tr className="h-[19px]">
              {columns.map(([name, width], i) => (
                <th key={i} scope="col" className={clsx(cell, width, "font-normal whitespace-nowrap", i === 1 ? "bg-linear-to-b from-[#fbd8a0] to-[#f3c069] text-[#5a0a5a]" : "bg-linear-to-b from-white to-[#efefef]")}>
                  {name}
                </th>
              ))}
            </tr>
          </thead>
          <tbody>
            {rows.map((r, n) => (
              <tr key={n} className="h-[34px] bg-[#ccffd9]">
                <th scope="row" className={clsx(cell, "bg-linear-to-r from-white to-[#efefef] pr-2 font-normal")}>{n + 3}</th>
                <td className={clsx(cell, "border-r-black")}>{r[0]}</td>
                <td className={cell}>{r[1]}</td>
                <td className={cell}><Grade /></td>
                <td className={cell}>{r[2]}</td>
                <td className={cell}><Shape size={r[3]} open={n === 2} /></td>
                {r.slice(4).map((v, i) => (
                  <td key={i} className={clsx(cell, i === 9 && "whitespace-nowrap")}>{v}</td>
                ))}
              </tr>
            ))}
            <tr className="h-[19px]">
              <th scope="row" className={clsx(cell, "bg-linear-to-r from-white to-[#efefef] pr-2 font-normal")}>6</th>
              {columns.slice(1).map((c, i) => (
                <td key={i} className={clsx(cell, i === 0 && "border-r-black")} />
              ))}
            </tr>
          </tbody>
        </table>
      </div>
      <div className="flex w-[15px] flex-col items-center bg-[#f0f0f0]">
        <span className="py-1"><ScrollArrow d="M.5 6.500l4-4 4 4" /></span>
        <span className="w-full flex-[84]" />
        <span className="w-full flex-[33] bg-[#cdcdcd]" />
        <span className="py-1"><ScrollArrow d="M.5 2.500l4 4 4-4" /></span>
      </div>
    </div>
    <div className="mb-px flex h-[15px] shrink-0 items-center bg-[#f0f0f0] pr-[14px]">
      <span className="px-1"><ScrollArrow d="M6.500.5l-4 4 4 4" /></span>
      <span className="h-full flex-[796] bg-[#cdcdcd]" />
      <span className="flex-[313]" />
      <span className="px-1"><ScrollArrow d="M2.500.5l4 4-4 4" /></span>
    </div>
  </div>
);

const RebarPanel = () => (
  <section className="flex h-[203px] shrink-0 pt-1 pr-[2px]">
    <div className="flex w-3 shrink-0 flex-col items-center">
      <button aria-label="关闭钢筋编辑">
        <svg viewBox="0 0 10 10" className="h-[10px] w-[10px]"><path d="M.5.5h9v9h-9z" fill="#f3e6e6" stroke="#222" /><path d="M.5 1h9" stroke="#a03030" strokeWidth="2" /><path d="M2.500 3.500l5 5M7.500 3.500l-5 5" stroke="#222" strokeWidth="1.400" /></svg>
      </button>
      <span className="mt-1 w-[7px] flex-1 border-x-2 border-dotted border-[#c4c4c4]" />
    </div>
    <div className="flex min-w-0 flex-1 flex-col pb-px">
      <Group className="h-[26px] shrink-0">
        <Tool icon="first" disabled />
        <Tool icon="prev" disabled />
        <Tool icon="next" />
        <Tool icon="last" />
        <Sep />
        <Tool icon="up" disabled />
        <Tool icon="down" />
        <Sep />
        <Tool icon="insert" label="插入" disabled />
        <Tool icon="remove" label="删除" disabled />
        <Tool icon="scaleBar" label="缩尺配筋" />
        <Tool icon="barInfo" label="钢筋信息" />
        <Tool icon="library" label="钢筋图库" />
        <Tool icon="others" label="其他" arrow />
        <Tool label="关闭" />
        <Sep />
        <span className="pl-1 whitespace-nowrap">单构件钢筋总重(kg)：265.356</span>
      </Group>
      <RebarTable />
    </div>
  </section>
);

const statusCell = "flex h-5 items-center border-2 border-[#dcdcdc] bg-linear-to-b from-white to-[#f1f1f1]";

const StatusBar = () => (
  <footer className="flex h-[22px] shrink-0 items-end gap-[2px] font-[Liberation_Sans,Noto_Sans_CJK_SC,sans-serif] whitespace-nowrap">
    <span className={clsx(statusCell, "w-[148px]")}>X=149354 Y=12129</span>
    <span className={clsx(statusCell, "w-[78px]")}>层高:3.47m</span>
    <span className={clsx(statusCell, "w-[98px]")}>底标高:-3.5m</span>
    <span className={clsx(statusCell, "w-[48px]")}>1(1)</span>
    <span className={clsx(statusCell, "flex-1")} />
  </footer>
);

const Sogou = ({ className }) => (
  <svg viewBox="0 0 28 28" className={className} aria-hidden="true">
    <path d="M1 5q0-2 2-2.500L22 0q2 0 3 2l3 19q0 3-2 3L8 28q-3 0-3.500-2z" fill="#ee4a16" />
    <path d="M22 6Q8 4 7 10q0 4 8 4t6 5q-3 4-14 2" fill="none" stroke="#fff" strokeWidth="4" />
  </svg>
);

const ImeBar = () => (
  <div className="absolute right-0 bottom-10 flex h-[26px] items-center gap-2 rounded-l-md border border-[#b9cfe8] bg-[#fafcfe] pr-1 text-[#1f74c8]">
    <Sogou className="-ml-1 h-7 w-7" />
    <button className="-ml-1 text-[14px] leading-5 font-bold">英</button>
    <svg viewBox="0 0 12 12" className="h-3 w-3"><circle cx="3" cy="3" r="1.500" fill="#1f74c8" /><path d="M8 5h3q0 4-3 6l1-3H8z" fill="#1f74c8" /></svg>
    <svg viewBox="0 0 12 16" className="h-4 w-3"><rect x="3.500" width="5" height="9" rx="2.500" fill="#1f74c8" /><path d="M1 6q0 5.500 5 5.500T11 6M6 12v3M3 15h6" fill="none" stroke="#1f74c8" strokeWidth="1.500" /></svg>
    <svg viewBox="0 0 16 12" className="h-3 w-4"><rect width="16" height="12" rx="1" fill="#1f74c8" /><path d="M2 3.500h12M2 6h12M4 9h8" stroke="#fff" strokeDasharray="2 1" /></svg>
    <svg viewBox="0 0 16 16" className="h-4 w-4"><circle cx="7" cy="4" r="3" fill="#b9c4d6" /><path d="M1 14q0-6 6-6t5 6z" fill="#b9c4d6" /><path d="M8 9v5M10 9.500h4l-2 5" fill="none" stroke="#fff" strokeWidth="2" /><path d="M8.500 9.500v5M10 9.500h4l-2 5" fill="none" stroke="#8f9db5" /></svg>
    <svg viewBox="0 0 14 14" className="h-[14px] w-[14px]"><path d="M4 1q3 2 6 0l4 2-1 4-2-1v8H3V6L1 7 0 3z" fill="#1f74c8" /></svg>
    <svg viewBox="0 0 14 14" className="h-[14px] w-[14px]"><path d="M2 12.500L8 6" stroke="#1f74c8" strokeWidth="3" strokeLinecap="round" /><path d="M12 1L9.500 3.500l1 1L13 2q2 4-1.500 6-5 0-4.500-4Q8 0 12 1z" fill="#1f74c8" /></svg>
  </div>
);

const apps = [
  { name: "风扇", art: <path d="M11 11Q2 12 2 6t6-4q5 1 3 9zM13 11q-1-9 5-9t4 6q-1 5-9 3zM13 13q9-1 9 5t-6 4q-5-1-3-9zM11 13q1 9-5 9t-4-6q1-5 9-3z" fill="#e6e6e6" /> },
  { name: "浏览器", art: <path d="M20 4q-4 1-8 1-7 1-7 8 1 7 8 7 6-1 6-7h-6M17 8q-7-2-8 4 0 4 5 4M14 10.500q3 0 5 2-1 6-8 7" fill="none" stroke="#d0d0d0" strokeWidth="1.400" /> },
  { name: "Edge", art: <path d="M3 11Q4 2 13 2q9 1 9 11H9q0 5 6 5 4 0 6-2v5q-3 2-8 2-9-1-8-9 0-4 4-6-2 2-2 4h8q0-5-4-5-6 0-7 4z" fill="#0a7be0" /> },
  { name: "应用商店", art: <><path d="M2 7l20-2v18L2 21z" fill="#fff" /><path d="M8 6q0-5 4-5t4 5" fill="none" stroke="#fff" strokeWidth="1.500" /><path d="M7 11l4-.5V14H7zM12 10.400l5-.6V14h-5zM7 15h4v3.500L7 18zM12 15h5v4.200l-5-.6z" fill="#000c10" /></> },
  { name: "文件资源管理器", open: true, art: <><path d="M1 4h8l2 2h12v15H1z" fill="#e8b64c" /><path d="M1 8h22v13H1z" fill="#fbe08f" /><path d="M6 14h12v7h-3v-4H9v4H6z" fill="#2f9ce4" /></> },
  { name: "广联达", open: true, art: <><path d="M21 2q-4 2-8 1Q3 4 2 13q1 9 10 10 9-1 10-10l-9-1v4h4q-2 4-6 3-5-2-4-7 1-6 8-6 5 0 6-4z" fill="#1596ea" /><path d="M5 16q5 7 13 2-5 6-12 2z" fill="#0b5fb8" /></> },
  { name: "钢筋算量", open: true, active: true, art: <><rect x="1" y="1" width="22" height="22" rx="4" fill="#1291ee" /><path d="M5 12h14M12 5v13M12 5.500q5 0 5 3.500M6 12q0 6 6 6h2" fill="none" stroke="#fff" strokeWidth="1.800" /></> },
  { name: "360浏览器", open: true, art: <><circle cx="12" cy="12" r="11" fill="#4fb53c" /><circle cx="12" cy="12" r="10" fill="none" stroke="#bfe8b0" /><path d="M18 12q0-6-6-6t-6 6 6 6q4 0 5-2M6 12h12" fill="none" stroke="#fff" strokeWidth="2.600" /></> },
  { name: "记事", open: true, art: <><rect x="1" y="1" width="22" height="22" rx="2" fill="#f29a1f" /><path d="M5 4l13 1-1 15-12-1z" fill="#fffbe8" /><path d="M7 8h8M7 11h7M7 14h5" stroke="#b58a50" /><path d="M10 16l8-10 2.500 1.500L12.500 18 9 19z" fill="#6b4a2a" /></> },
  { name: "帮助", open: true, art: <><path d="M4 9h10v13H4z" fill="#f2f2f2" stroke="#444" /><path d="M6 13h6M6 16h6M6 19h6" stroke="#444" /><path d="M12 6q0-4 4-4t4 4-4 5v3M16 16v3" fill="none" stroke="#f5e100" strokeWidth="3.500" /></> },
];

const Taskbar = () => (
  <div className="flex h-10 shrink-0 items-stretch bg-[#020c10] text-white">
    <button aria-label="开始" className="flex w-12 items-center justify-center bg-black">
      <svg viewBox="0 0 16 16" className="h-4 w-4"><path d="M0 2.300l6.500-.9v6.100H0zM7.500 1.200L16 0v7.500H7.500zM0 8.500h6.500v6.100L0 13.700zM7.500 8.500H16V16l-8.500-1.200z" fill="#fff" /></svg>
    </button>
    <label className="flex w-[343px] items-center bg-[#333] px-[9px]">
      <svg viewBox="0 0 22 22" className="h-[22px] w-[22px] shrink-0"><circle cx="11" cy="11" r="9" fill="none" stroke="#f4f4f4" strokeWidth="2.500" /></svg>
      <input aria-label="搜索" placeholder="在这里输入你要搜索的内容" className="ml-[5px] min-w-0 flex-1 bg-transparent text-[14px] outline-none placeholder:text-[#9c9c9c]" />
      <svg viewBox="0 0 12 18" className="mr-[5px] h-[18px] w-3"><rect x="3.500" y=".5" width="5" height="11" rx="1" fill="none" stroke="#9c9c9c" /><path d="M1 9v5h10V9M6 14v3M3 17.500h6" fill="none" stroke="#9c9c9c" /></svg>
    </label>
    <div className="ml-1 flex gap-px">
      {apps.map((a) => (
        <button key={a.name} aria-label={a.name} className={clsx("flex w-12 items-center justify-center border-b-2", a.open ? "border-[#76b9ed]" : "border-transparent", a.active && "bg-[#3a4145]")}>
          <svg viewBox="0 0 24 24" className="h-6 w-6">{a.art}</svg>
        </button>
      ))}
    </div>
    <div className="ml-auto flex items-center">
      <div className="mr-[18px] text-center leading-[17px]">
        <p>54%</p>
        <p>CPU使用</p>
      </div>
      <div className="flex items-center gap-2">
        <svg viewBox="0 0 12 8" className="h-2 w-3"><path d="M1 7l5-5 5 5" fill="none" stroke="#fff" strokeWidth="1.300" /></svg>
        <svg viewBox="0 0 18 12" className="h-3 w-[18px]"><path d="M5 3.500h11v7H5zM7 5.500h7v3H7zM16.500 6v2M1 1v3h4V1M2 0v1M4 0v1M3 4v4h2" fill="none" stroke="#fff" /></svg>
        <svg viewBox="0 0 14 14" className="h-[14px] w-[14px]"><path d="M1 13Q1 2 13 1M4 13q0-8 9-9M7 13q0-5 6-6M10 13q0-2 3-3" fill="none" stroke="#cfcfcf" /></svg>
        <svg viewBox="0 0 16 12" className="h-3 w-4"><path d="M1 4h2.500L7 1v10L3.500 8H1zM9 4q2 2 0 4M11 2.500q3 3.500 0 7M13 1q4 5 0 10" fill="none" stroke="#fff" /></svg>
        <span className="text-[14px]">中</span>
        <Sogou className="ml-2 h-4 w-4" />
      </div>
      <div className="mr-[6px] ml-[17px] w-[59px] text-center leading-[18px]">
        <p>18:19</p>
        <p>2017/8/25</p>
      </div>
      <button aria-label="通知" className="flex h-full w-[54px] items-center justify-center bg-black">
        <svg viewBox="0 0 24 24" className="h-6 w-6">
          <path d="M2 2h15v12H9l-3 3v-3H2z" fill="#fff" />
          <path d="M4 5h11M4 8h11M4 11h7" stroke="#000" />
          <circle cx="16" cy="16" r="7" fill="#333" stroke="#888" />
          <text x="16" y="20" fill="#fff" fontSize="11" textAnchor="middle">2</text>
        </svg>
      </button>
    </div>
  </div>
);

export default function App() {
  return (
    <div className="relative flex h-screen w-full flex-col overflow-hidden bg-[#f0f0f0] font-[Open_Sans,Noto_Sans_CJK_SC,sans-serif] text-[12px] leading-4 text-black">
      <TitleBar />
      <MenuBar />
      <MainToolbar />
      <div className="mt-[3px] flex min-h-0 flex-1">
        <SidePanel />
        <main className="flex min-w-0 flex-1 flex-col">
          <EditToolbar />
          <ComponentToolbar />
          <DrawToolbar />
          <Viewport />
          <SnapBar />
          <RebarPanel />
        </main>
      </div>
      <StatusBar />
      <Taskbar />
      <ImeBar />
    </div>
  );
}
